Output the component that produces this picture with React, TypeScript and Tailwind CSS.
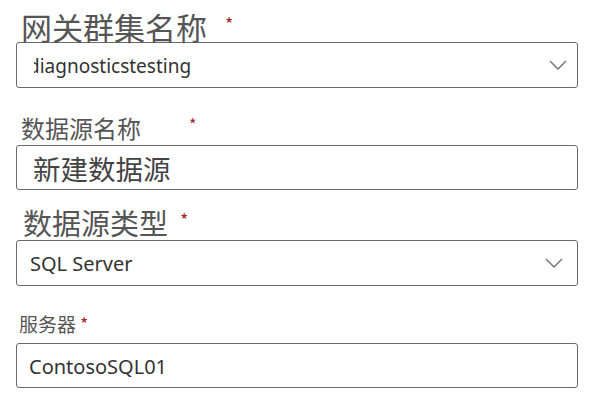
import React from "react";

const cjk = { fontFamily: '"Noto Sans CJK SC", "Noto Sans", sans-serif' };
const latin = { fontFamily: '"Noto Sans", "Noto Sans CJK SC", sans-serif' };

function Chevron() {
  return (
    <svg width="18" height="10" viewBox="0 0 18 10" fill="none">
      <path d="M1 1 L9 9 L17 1" stroke="#6b6b6b" strokeWidth="1.3" />
    </svg>
  );
}

function Star({ className }: { className: string }) {
  return <span className={"text-[#a4262c] leading-none self-start " + className}>*</span>;
}

export default function App() {
  return (
    <div className="w-[602px] h-[400px] bg-white overflow-hidden pl-[16px] pr-[24px]" style={cjk}>
      {/* Label 1 */}
      <div className="flex items-start pt-[11px] pl-[5px] h-[42px]">
        <span className="text-[31px] leading-none text-[#555555]">网关群集名称</span>
        <Star className="text-[18px] ml-[18px] mt-[3px]" />
      </div>
      {/* Box 1 */}
      <div className="h-[46px] border border-[#6a6a6a] rounded-[3px] flex items-center pr-[10px]">
        <div className="flex-1 overflow-hidden ml-[17px] h-full flex items-center">
          <span className="text-[19px] pt-[2px] text-[#333333] whitespace-nowrap -ml-[6px]" style={latin}>
            diagnosticstesting
          </span>
        </div>
        <Chevron />
      </div>
      {/* Label 2 */}
      <div className="flex items-start mt-[28px] pl-[5px] h-[24px]">
        <span className="text-[24px] leading-none text-[#555555]">数据源名称</span>
        <Star className="text-[16px] ml-[48px]" />
      </div>
      {/* Box 2 */}
      <div className="mt-[5px] h-[45px] border border-[#6a6a6a] rounded-[3px] flex items-center pl-[16px]">
        <span className="text-[27.5px] leading-none text-[#444444] pt-[2px]">新建数据源</span>
      </div>
      {/* Label 3 */}
      <div className="flex items-start mt-[18px] pl-[7px] h-[28px]">
        <span className="text-[29px] leading-none text-[#555555]">数据源类型</span>
        <Star className="text-[18px] ml-[12px] mt-[2px]" />
      </div>
      {/* Box 3 */}
      <div className="mt-[4px] h-[46px] border border-[#6a6a6a] rounded-[3px] flex items-center pl-[13px] pr-[14px] justify-between">
        <span className="text-[20px] pt-[2px] text-[#333333]" style={latin}>SQL Server</span>
        <Chevron />
      </div>
      {/* Label 4 */}
      <div className="flex items-start mt-[28px] pl-[3px] h-[19px]">
        <span className="text-[19px] leading-none text-[#555555]">服务器</span>
        <Star className="text-[18px] ml-[4px]" />
      </div>
      {/* Box 4 */}
      <div className="mt-[10px] h-[45px] border border-[#6a6a6a] rounded-[3px] flex items-center pl-[12px]">
        <span className="text-[20px] pt-[2px] text-[#333333]" style={latin}>ContosoSQL01</span>
      </div>
    </div>
  );
}
